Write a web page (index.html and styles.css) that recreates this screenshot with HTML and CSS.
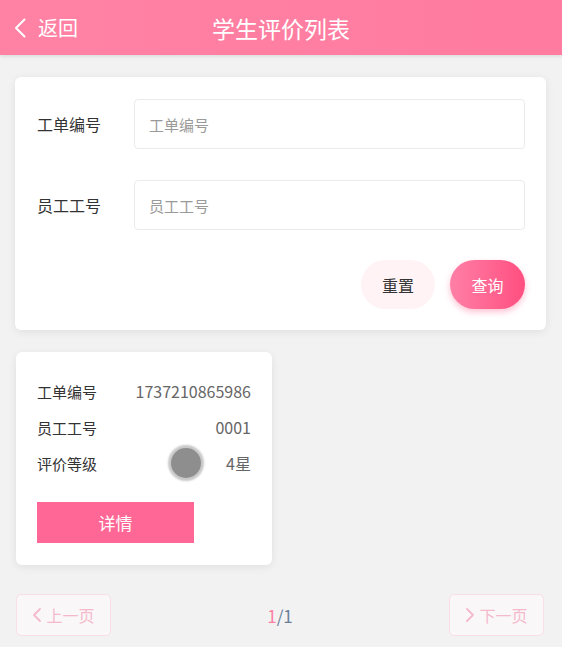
FILE: index.html
```html
<!DOCTYPE html>
<html lang="zh-CN">
<head>
  <meta charset="UTF-8" />
  <meta name="viewport" content="width=device-width, initial-scale=1.0"/>
  <title>学生评价列表</title>
  <link rel="stylesheet" href="styles.css">
</head>
<body>

  <div class="top-bar">
    <div class="back-btn">
      <svg class="back-icon" width="14" height="22" viewBox="0 0 14 22">
        <path d="M11.5 2.5 L3 11 L11.5 19.5" fill="none" stroke="#fff" stroke-width="2" stroke-linecap="round" stroke-linejoin="round"/>
      </svg>
      返回
    </div>
    <div class="page-title">学生评价列表</div>
  </div>

  <div class="page">
    <div class="search-card">
      <div class="form-row">
        <label class="form-label">工单编号</label>
        <input class="form-input" type="text" placeholder="工单编号">
      </div>
      <div class="form-row">
        <label class="form-label">员工工号</label>
        <input class="form-input" type="text" placeholder="员工工号">
      </div>
      <div class="form-actions">
        <button class="btn-reset">重置</button>
        <button class="btn-search">查询</button>
      </div>
    </div>

    <div class="result-list">
      <div class="result-card">
        <div class="result-row">
          <span class="result-label">工单编号</span>
          <span class="result-value">1737210865986</span>
        </div>
        <div class="result-row">
          <span class="result-label">员工工号</span>
          <span class="result-value">0001</span>
        </div>
        <div class="result-row">
          <span class="result-label">评价等级</span>
          <span class="rate-dot"></span>
          <span class="result-value">4星</span>
        </div>
        <button class="btn-detail">详情</button>
      </div>
    </div>

    <div class="pager">
      <button class="pager-btn">
        <svg width="10" height="16" viewBox="0 0 10 16"><path d="M8 2 L2 8 L8 14" fill="none" stroke="#f5b9cc" stroke-width="1.8" stroke-linecap="round" stroke-linejoin="round"/></svg>
        上一页
      </button>
      <div class="pager-info"><span class="pager-current">1</span>/1</div>
      <button class="pager-btn">
        <svg width="10" height="16" viewBox="0 0 10 16"><path d="M2 2 L8 8 L2 14" fill="none" stroke="#f5b9cc" stroke-width="1.8" stroke-linecap="round" stroke-linejoin="round"/></svg>
        下一页
      </button>
    </div>
  </div>

</body>
</html>
```

FILE: styles.css
```css
body {
  font-family: "Noto Sans CJK SC", "Noto Sans", sans-serif;
  margin: 0;
  padding: 0;
  background-color: #f2f2f2;
  color: #333;
}

/* Barre du haut */
.top-bar {
  height: 55px;
  background: linear-gradient(90deg, #ff82a5, #ff7ba0);
  box-shadow: 0 2px 3px rgba(0, 0, 0, 0.08);
  display: flex;
  align-items: center;
  position: relative;
  color: white;
}

.back-btn {
  display: flex;
  align-items: center;
  gap: 11px;
  padding-left: 13px;
  font-size: 20px;
}

.page-title {
  position: absolute;
  left: 0;
  right: 0;
  text-align: center;
  font-size: 23px;
  pointer-events: none;
}

.page {
  padding: 22px 16px 0 15px;
}

/* Carte de recherche */
.search-card {
  background: white;
  border-radius: 6px;
  box-shadow: 0 2px 8px rgba(0, 0, 0, 0.08);
  padding: 22px 21px 21px 22px;
  display: flex;
  flex-direction: column;
}

.form-row {
  display: flex;
  align-items: center;
  margin-bottom: 31px;
}

.form-row:nth-child(2) {
  margin-bottom: 30px;
}

.form-label {
  width: 97px;
  font-size: 16px;
  color: #333;
}

.form-input {
  flex: 1;
  height: 50px;
  box-sizing: border-box;
  border: 1px solid #ebebeb;
  border-radius: 4px;
  padding: 0 14px;
  font-family: inherit;
  font-size: 15px;
  color: #333;
  outline: none;
}

.form-input::placeholder {
  color: #9a9a9a;
}

.form-actions {
  display: flex;
  justify-content: flex-end;
  gap: 15px;
}

.btn-reset,
.btn-search {
  width: 74px;
  height: 49px;
  border: none;
  border-radius: 25px;
  font-family: inherit;
  font-size: 16px;
  cursor: pointer;
}

.btn-reset {
  background: #fff3f6;
  color: #333;
}

.btn-search {
  width: 75px;
  background: linear-gradient(90deg, #ff7fa6, #ff4f80);
  color: white;
  box-shadow: 0 3px 6px rgba(255, 80, 128, 0.35);
}

/* Liste des résultats */
.result-list {
  display: flex;
  margin-top: 22px;
}

.result-card {
  width: 256px;
  box-sizing: border-box;
  margin-left: 1px;
  background: white;
  border-radius: 6px;
  box-shadow: 0 2px 8px rgba(0, 0, 0, 0.08);
  padding: 21px 21px 22px 21px;
}

.result-row {
  height: 36px;
  display: flex;
  align-items: center;
  justify-content: space-between;
  font-size: 15px;
}

.result-label {
  color: #333;
}

.result-value {
  color: #666;
  font-size: 16px;
}

.rate-dot {
  width: 30px;
  height: 30px;
  border-radius: 50%;
  background: #8e8e8e;
  box-shadow: 0 0 2px 3px #c8c8c8;
  margin-left: auto;
  margin-right: 25px;
}

.btn-detail {
  display: block;
  margin-top: 21px;
  width: 157px;
  height: 41px;
  border: none;
  background: #ff6896;
  color: white;
  font-family: inherit;
  font-size: 17px;
  cursor: pointer;
}

/* Pagination */
.pager {
  display: flex;
  justify-content: space-between;
  align-items: center;
  margin-top: 29px;
  padding-left: 1px;
  padding-right: 2px;
}

.pager-btn {
  width: 95px;
  height: 42px;
  border: 1px solid #f9dee7;
  border-radius: 5px;
  background: #faf7f8;
  color: #f5b9cc;
  font-family: inherit;
  font-size: 16px;
  display: flex;
  align-items: center;
  justify-content: center;
  gap: 4px;
}

.pager-info {
  font-size: 17px;
  color: #6b7f99;
}

.pager-current {
  color: #ff7fa3;
}
```
